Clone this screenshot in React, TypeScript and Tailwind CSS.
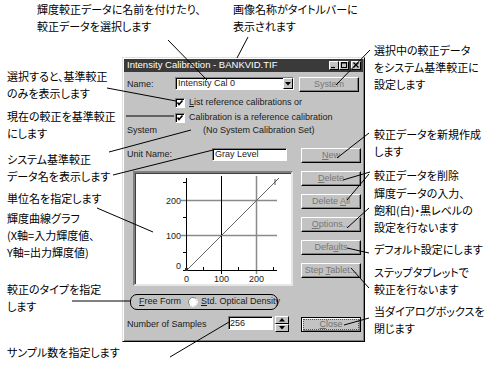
import React from 'react';

const jp = "font-['Noto_Sans_CJK_JP',sans-serif] text-[11px] leading-[17px] whitespace-nowrap text-black [font-feature-settings:'palt']";

const callouts: [number, number, number, number][] = [
  [168, 40, 207, 80],
  [248, 37, 237, 58],
  [107, 88, 176, 101],
  [126, 116, 174, 116],
  [109, 152, 191, 130],
  [113, 175, 213, 150],
  [97, 208, 153, 232],
  [72, 301, 131, 301],
  [170, 357, 229, 322],
  [370, 50, 336, 85],
  [369, 133, 337, 158],
  [343, 180, 370, 172],
  [369, 174, 347, 200],
  [369, 208, 347, 228],
  [347, 248, 369, 253],
  [351, 268, 369, 288],
  [344, 325, 369, 318],
];

function Btn({ children, def }: { children: React.ReactNode; def?: boolean }) {
  if (def) {
    return (
      <div className="flex h-[15px] w-[60px] items-center justify-center border border-black bg-[#c3c3c3] p-[1px] shadow-[inset_1px_1px_white,inset_-1px_-1px_#808080]">
        <div className="flex h-[11px] w-full items-center justify-center border border-dotted border-[#555] text-[9px] leading-none text-[#6e6e6e]">
          {children}
        </div>
      </div>
    );
  }
  return (
    <div className="flex h-[15px] w-[60px] items-center justify-center border border-t-white border-l-white border-r-black border-b-black bg-[#c3c3c3] text-[9px] text-[#777] shadow-[inset_-1px_-1px_#808080]">
      {children}
    </div>
  );
}

function Check() {
  return (
    <div className="h-[10px] w-[10px] border border-t-[#808080] border-l-[#808080] border-r-white border-b-white bg-white shadow-[inset_1px_1px_black]">
      <svg width="8" height="8" viewBox="0 0 8 8">
        <path d="M1.5 3.5 L3 5.5 L6.5 1.5" stroke="black" strokeWidth="1.6" fill="none" />
      </svg>
    </div>
  );
}

function Radio({ on }: { on?: boolean }) {
  return (
    <svg width="10" height="10" viewBox="0 0 10 10">
      <circle cx="5" cy="5" r="4.5" fill="white" stroke="#808080" />
      <path d="M1.8 8.2 A4.5 4.5 0 0 0 8.2 1.8" stroke="white" fill="none" />
      {on && <circle cx="5" cy="5" r="1.8" fill="black" />}
    </svg>
  );
}

function Graph() {
  return (
    <div className="ml-[6px] mt-[10px] h-[115px] w-[160px] border-2 border-t-[#808080] border-l-[#808080] border-r-[#e6e6e6] border-b-[#e6e6e6] bg-white shadow-[inset_1px_1px_#404040]">
      <svg width="156" height="111" viewBox="135 173 156 111" className="block">
        <line x1="181" y1="200.5" x2="277" y2="200.5" stroke="#8a8a8a" strokeWidth="1.5" />
        <line x1="181" y1="235.5" x2="277" y2="235.5" stroke="#8a8a8a" strokeWidth="1.5" />
        <line x1="256.5" y1="176" x2="256.5" y2="274" stroke="#8a8a8a" strokeWidth="1.5" />
        <line x1="221.5" y1="176" x2="221.5" y2="274" stroke="black" />
        <line x1="186.5" y1="178" x2="186.5" y2="271" stroke="black" />
        <line x1="183" y1="270.5" x2="277" y2="270.5" stroke="black" />
        {[252.5, 217.5, 182.5].map((y) => (
          <line key={y} x1="183" y1={y} x2="186" y2={y} stroke="black" />
        ))}
        {[203.5, 238.5, 273.5].map((x) => (
          <line key={x} x1={x} y1="267" x2={x} y2="270" stroke="black" />
        ))}
        <line x1="187" y1="270" x2="276" y2="181" stroke="#666" />
        <path d="M275 179 L275 185 M275 182 L279 178" stroke="#555" fill="none" />
        <rect x="185" y="268" width="3" height="3" fill="#333" />
        <g fontFamily="Liberation Sans, Arial, sans-serif" fontSize="9" fill="#222">
          <text x="181" y="203.5" textAnchor="end">200</text>
          <text x="181" y="238.5" textAnchor="end">100</text>
          <text x="181" y="269" textAnchor="end">0</text>
          <text x="186.5" y="282" textAnchor="middle">0</text>
          <text x="221.5" y="282" textAnchor="middle">100</text>
          <text x="256.5" y="282" textAnchor="middle">200</text>
        </g>
      </svg>
    </div>
  );
}

function Dialog() {
  return (
    <div className="flex h-[285px] w-[243px] flex-col border border-t-[#dfdfdf] border-l-[#dfdfdf] border-r-black border-b-black bg-[#c3c3c3] p-[1px] text-[9px] text-[#1a1a1a] shadow-[inset_1px_1px_white,inset_-1px_-1px_#808080]">
      <div className="flex h-[13px] items-center bg-[#3a3a3a] pl-[3px] pr-[2px] text-[9.5px] text-white">
        <span>Intensity Calibration - BANKVID.TIF</span>
        <div className="ml-auto flex items-center">
          <div className="h-[9px] w-[10px] border border-t-white border-l-white border-r-black border-b-black bg-[#c3c3c3]">
            <svg width="8" height="7" viewBox="0 0 8 7"><line x1="1" y1="5.5" x2="5" y2="5.5" stroke="black" strokeWidth="1.2" /></svg>
          </div>
          <div className="h-[9px] w-[10px] border border-t-white border-l-white border-r-black border-b-black bg-[#c3c3c3]">
            <svg width="8" height="7" viewBox="0 0 8 7"><rect x="1.5" y="0.5" width="5" height="5" stroke="black" fill="none" /><line x1="1.5" y1="1" x2="6.5" y2="1" stroke="black" /></svg>
          </div>
          <div className="ml-[2px] h-[9px] w-[10px] border border-t-white border-l-white border-r-black border-b-black bg-[#c3c3c3]">
            <svg width="8" height="7" viewBox="0 0 8 7"><path d="M1.5 0.5 L6.5 5.5 M6.5 0.5 L1.5 5.5" stroke="black" strokeWidth="1.2" /></svg>
          </div>
        </div>
      </div>

      <div className="flex flex-col pl-[3px]">
        <div className="mt-[5px] flex items-start">
          <div className="w-[48px] pt-[1px]">Name:</div>
          <div className="flex h-[13px] w-[119px] border border-t-[#808080] border-l-[#808080] border-r-white border-b-white bg-white shadow-[inset_1px_1px_black]">
            <div className="flex-1 pl-[2px] leading-[11px]">Intensity Cal 0</div>
            <div className="flex h-full w-[10px] items-center justify-center border border-t-white border-l-white border-r-black border-b-black bg-[#c3c3c3]">
              <svg width="6" height="4" viewBox="0 0 6 4"><path d="M0 0 L6 0 L3 3.5 Z" fill="black" /></svg>
            </div>
          </div>
          <div className="ml-[5px]">
            <Btn>System</Btn>
          </div>
        </div>

        <div className="ml-[48px] mt-[6px] flex h-[10px] items-center gap-[4px]">
          <Check />
          <span><span className="underline">L</span>ist reference calibrations or</span>
        </div>
        <div className="ml-[48px] mt-[5px] flex h-[10px] items-center gap-[4px]">
          <Check />
          <span>Calibration is a reference calibration</span>
        </div>

        <div className="mt-[2px] flex h-[11px] items-center">
          <div className="w-[76px]">System</div>
          <div>(No System Calibration Set)</div>
        </div>

        <div className="mt-[12px] flex">
          <div className="flex w-[174px] flex-col">
            <div className="flex h-[13px] items-center">
              <div className="w-[85px]">Unit Name:</div>
              <div className="h-[13px] w-[75px] border border-t-[#808080] border-l-[#808080] border-r-white border-b-white bg-white pl-[2px] leading-[11px] shadow-[inset_1px_1px_black]">
                Gray Level
              </div>
            </div>
            <Graph />
            <div className="ml-[3px] mt-[8px] flex h-[16px] w-[148px] items-center whitespace-nowrap rounded-[7px] border border-black pl-[5px]">
              <Radio on />
              <span className="ml-[3px]"><span className="underline">F</span>ree Form</span>
              <span className="ml-[7px]"><Radio /></span>
              <span className="ml-[3px]"><span className="underline">S</span>td. Optical Density</span>
            </div>
            <div className="mt-[6px] flex items-start">
              <div className="w-[101px] pt-[2px]">Number of Samples</div>
              <div className="h-[14px] w-[45px] border border-t-[#808080] border-l-[#808080] border-r-white border-b-white bg-white pl-[1px] leading-[12px] shadow-[inset_1px_1px_black]">
                256
              </div>
              <div className="ml-[2px] flex h-[16px] w-[14px] flex-col">
                <div className="flex h-[8px] items-center justify-center border border-t-white border-l-white border-r-black border-b-black bg-[#c3c3c3]">
                  <svg width="6" height="4" viewBox="0 0 6 4"><path d="M0 3.5 L6 3.5 L3 0 Z" fill="black" /></svg>
                </div>
                <div className="flex h-[8px] items-center justify-center border border-t-white border-l-white border-r-black border-b-black bg-[#c3c3c3]">
                  <svg width="6" height="4" viewBox="0 0 6 4"><path d="M0 0 L6 0 L3 3.5 Z" fill="black" /></svg>
                </div>
              </div>
            </div>
          </div>

          <div className="flex flex-col gap-[8px]">
            <Btn><span><span className="underline">N</span>ew</span></Btn>
            <Btn><span><span className="underline">D</span>elete</span></Btn>
            <Btn><span>Delete <span className="underline">A</span>ll</span></Btn>
            <Btn><span><span className="underline">O</span>ptions...</span></Btn>
            <Btn><span>Defa<span className="underline">u</span>lts</span></Btn>
            <Btn><span>Step <span className="underline">T</span>ablet...</span></Btn>
            <div className="mt-[31px]">
              <Btn def><span><span className="underline">C</span>lose</span></Btn>
            </div>
          </div>
        </div>
      </div>
    </div>
  );
}

export default function App() {
  return (
    <div className="relative flex h-[373px] w-[488px] overflow-hidden bg-white font-['Liberation_Sans',Arial,sans-serif]">
      <div className="flex w-[370px] flex-col">
        <div className="flex h-[57px]">
          <div className={`${jp} w-[233px] pl-[37px] pt-[1px]`}>
            <p>輝度較正データに名前を付けたり、</p>
            <p>較正データを選択します</p>
          </div>
          <div className={`${jp} pt-[1px]`}>
            <p>画像名称がタイトルバーに</p>
            <p>表示されます</p>
          </div>
        </div>
        <div className="flex">
          <div className={`${jp} w-[122px] pl-[7px]`}>
            <div className="mt-[11px]">
              <p>選択すると、基準較正</p>
              <p>のみを表示します</p>
            </div>
            <div className="mt-[6px]">
              <p>現在の較正を基準較正</p>
              <p>にします</p>
            </div>
            <div className="mt-[9px]">
              <p>システム基準較正</p>
              <p>データ名を表示します</p>
            </div>
            <div className="mt-[5px]">
              <p>単位名を指定します</p>
            </div>
            <div className="mt-[3px]">
              <p>輝度曲線グラフ</p>
              <p>(X軸=入力輝度値、</p>
              <p>Y軸=出力輝度値)</p>
            </div>
            <div className="mt-[20px]">
              <p>較正のタイプを指定</p>
              <p>します</p>
            </div>
            <div className="mt-[29px]">
              <p>サンプル数を指定します</p>
            </div>
          </div>
          <Dialog />
        </div>
      </div>

      <div className={`${jp} pl-[4px]`}>
        <div className="mt-[42px]">
          <p>選択中の較正データ</p>
          <p>をシステム基準較正に</p>
          <p>設定します</p>
        </div>
        <div className="mt-[33px]">
          <p>較正データを新規作成</p>
          <p>します</p>
        </div>
        <div className="mt-[7px]">
          <p>較正データを削除</p>
        </div>
        <div className="mt-[1px]">
          <p>輝度データの入力、</p>
          <p>飽和(白)・黒レベルの</p>
          <p>設定を行ないます</p>
        </div>
        <div className="mt-[5px]">
          <p>デフォルト設定にします</p>
        </div>
        <div className="mt-[6px]">
          <p>ステップタブレットで</p>
          <p>較正を行ないます</p>
        </div>
        <div className="mt-[5px]">
          <p>当ダイアログボックスを</p>
          <p>閉じます</p>
        </div>
      </div>

      <svg className="pointer-events-none absolute left-0 top-0" width="488" height="373">
        {callouts.map(([x1, y1, x2, y2], i) => (
          <line key={i} x1={x1} y1={y1} x2={x2} y2={y2} stroke="black" strokeWidth="1" />
        ))}
      </svg>
    </div>
  );
}
